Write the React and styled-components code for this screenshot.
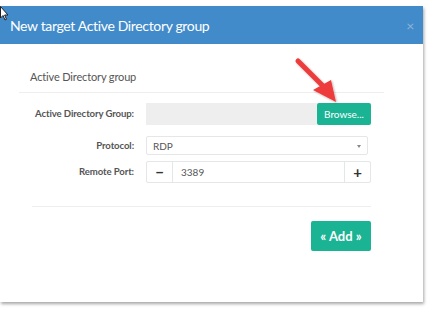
import React from "react";
import styled, { createGlobalStyle } from "styled-components";

const Global = createGlobalStyle`
  html, body {
    margin: 0;
    padding: 0;
    background: #ffffff;
    font-family: Lato, "Open Sans", sans-serif;
  }
`;

const Page = styled.div`
  position: relative;
  width: 429px;
  height: 310px;
  overflow: hidden;
  padding-top: 6px;
  box-sizing: border-box;
`;

const Modal = styled.div`
  width: 423px;
  height: 296px;
  background: #fff;
  box-shadow: 1px 2px 3px rgba(0, 0, 0, 0.35);
  display: flex;
  flex-direction: column;
`;

const Header = styled.div`
  height: 38px;
  background: #428bca;
  display: flex;
  align-items: center;
  justify-content: space-between;
  padding: 0 10px 0 10px;
  color: #fff;
  font-size: 14px;
  letter-spacing: -0.35px;
`;

const Close = styled.span`
  color: #8fb3d6;
  font-size: 14px;
  margin-right: -1px;
`;

const Body = styled.div`
  padding: 0 39px 0 19px;
  display: flex;
  flex-direction: column;
`;

const SectionTitle = styled.div`
  height: 49px;
  box-sizing: border-box;
  padding: 26px 0 0 11px;
  font-size: 11px;
  letter-spacing: -0.15px;
  color: #555;
  border-bottom: 1px solid #eeeeee;
`;

const Form = styled.div`
  display: grid;
  grid-template-columns: 115px 225px;
  column-gap: 12px;
  row-gap: 0;
  align-items: center;
  margin-top: 10px;
`;

const Label = styled.label`
  text-align: right;
  font-size: 9.6px;
  font-weight: 700;
  letter-spacing: -0.1px;
  color: #555;
  height: ${(p) => p.h}px;
  line-height: ${(p) => p.h}px;
  margin-bottom: ${(p) => p.mb}px;
`;

const Group = styled.div`
  display: flex;
  height: ${(p) => p.h}px;
  margin-bottom: ${(p) => p.mb}px;
`;

const ReadOnly = styled.div`
  flex: 1;
  background: #eeeeee;
`;

const GreenBtn = styled.button`
  border: 0;
  border-radius: 2px;
  background: #1ab394;
  color: #fff;
  font-family: inherit;
  font-size: ${(p) => p.fs || 10}px;
  font-weight: ${(p) => p.fw || 400};
  padding: 0;
  width: ${(p) => p.w}px;
  height: ${(p) => p.h || 22}px;
`;

const Select = styled.div`
  width: 222px;
  height: 19px;
  box-sizing: border-box;
  border: 1px solid #e5e6e7;
  border-radius: 2px;
  display: flex;
  align-items: center;
  justify-content: space-between;
  padding: 0 6px;
  font-size: 10px;
  color: #555;
`;

const Caret = styled.span`
  width: 0;
  height: 0;
  border-left: 2.5px solid transparent;
  border-right: 2.5px solid transparent;
  border-top: 3px solid #888;
  margin-top: 2px;
`;

const Spinner = styled.div`
  display: flex;
  width: 225px;
  height: 22px;
  box-sizing: border-box;
  border: 1px solid #e5e6e7;
  border-radius: 2px;
`;

const SpinBtn = styled.div`
  width: ${(p) => p.w}px;
  display: flex;
  align-items: center;
  justify-content: center;
  border-${(p) => p.side}: 1px solid #e5e6e7;
  color: #333;
  font-size: 15px;
  font-weight: 700;
`;

const SpinValue = styled.div`
  flex: 1;
  display: flex;
  align-items: center;
  padding-left: 8px;
  font-size: 10px;
  color: #555;
`;

const Divider = styled.div`
  margin: 23px 13px 0 13px;
  border-top: 1px solid #eeeeee;
`;

const Footer = styled.div`
  display: flex;
  justify-content: flex-end;
  padding: 14px 13px 0 0;
`;

const ArrowLayer = styled.svg`
  position: absolute;
  left: 285px;
  top: 50px;
`;

const Cursor = styled.svg`
  position: absolute;
  left: 0;
  top: 6px;
`;

export default function App() {
  return (
    <Page>
      <Global />
      <Modal>
        <Header>
          <span>New target Active Directory group</span>
          <Close>×</Close>
        </Header>
        <Body>
          <SectionTitle>Active Directory group</SectionTitle>
          <Form>
            <Label h={22} mb={11}>Active Directory Group:</Label>
            <Group h={22} mb={11}>
              <ReadOnly />
              <GreenBtn w={54}>Browse...</GreenBtn>
            </Group>
            <Label h={19} mb={6}>Protocol:</Label>
            <Group h={19} mb={6}>
              <Select>
                <span>RDP</span>
                <Caret />
              </Select>
            </Group>
            <Label h={22} mb={0}>Remote Port:</Label>
            <Group h={22} mb={0}>
              <Spinner>
                <SpinBtn w={25} side="right">−</SpinBtn>
                <SpinValue>3389</SpinValue>
                <SpinBtn w={25} side="left">+</SpinBtn>
              </Spinner>
            </Group>
          </Form>
          <Divider />
          <Footer>
            <GreenBtn w={60} h={30} fs={13} fw={700}>« Add »</GreenBtn>
          </Footer>
        </Body>
      </Modal>
      <ArrowLayer width="60" height="56" viewBox="0 0 60 56">
        <defs>
          <filter id="sh" x="-20%" y="-20%" width="140%" height="140%">
            <feDropShadow dx="1" dy="1" stdDeviation="1" floodColor="#000" floodOpacity="0.3" />
          </filter>
        </defs>
        <g filter="url(#sh)">
          <line x1="13" y1="11" x2="38" y2="36" stroke="#ee3b3b" strokeWidth="5" strokeLinecap="round" />
          <polygon points="28,40 46,30 51,52" fill="#ee3b3b" />
        </g>
      </ArrowLayer>
      <Cursor width="10" height="16" viewBox="0 0 10 16">
        <path d="M0.5 0.5 L0.5 12 L3 9.5 L5 14 L6.5 13.3 L4.6 9 L8 9 Z" fill="#fff" stroke="#222" strokeWidth="1" />
      </Cursor>
    </Page>
  );
}
